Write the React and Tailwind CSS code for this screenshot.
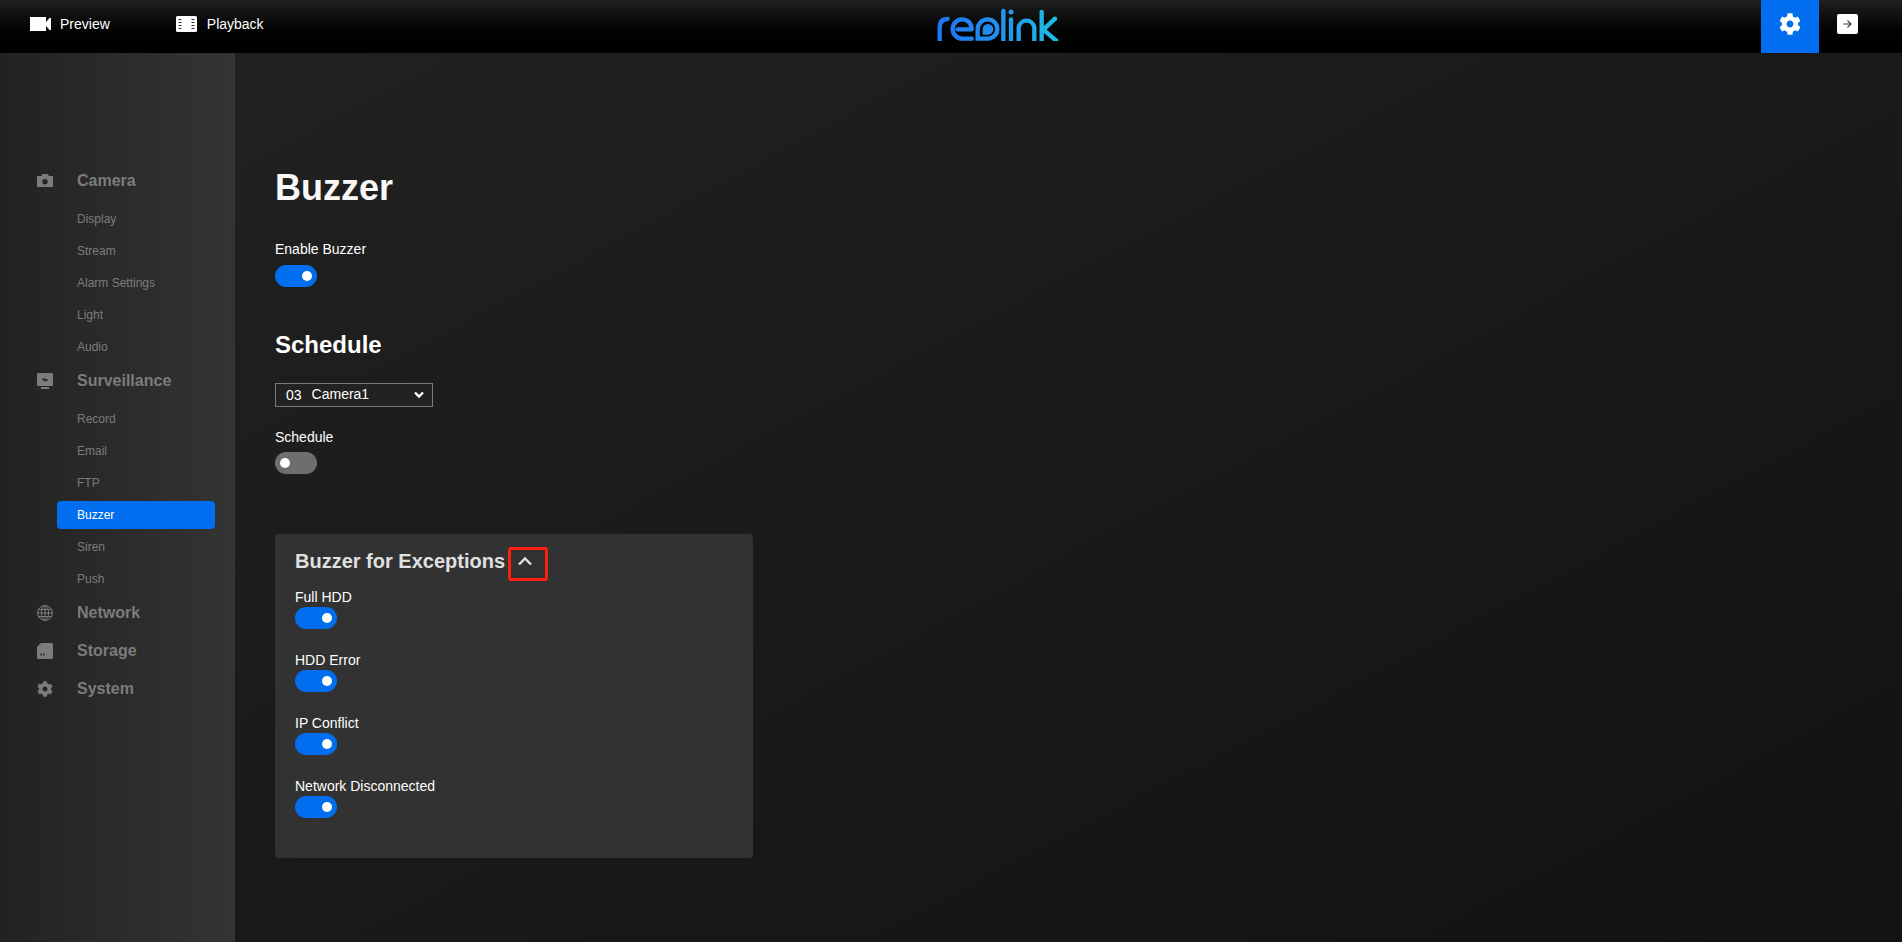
import { useState } from 'react';
import { FaCog } from 'react-icons/fa';

const menu = [
  { title: 'Camera', icon: CameraIcon, items: ['Display', 'Stream', 'Alarm Settings', 'Light', 'Audio'] },
  { title: 'Surveillance', icon: MonitorIcon, items: ['Record', 'Email', 'FTP', 'Buzzer', 'Siren', 'Push'] },
  { title: 'Network', icon: GlobeIcon, items: [] },
  { title: 'Storage', icon: StorageIcon, items: [] },
  { title: 'System', icon: FaCog, items: [] },
];

const exceptions = ['Full HDD', 'HDD Error', 'IP Conflict', 'Network Disconnected'];

function CameraIcon(props) {
  return (
    <svg viewBox="0 0 16 16" fill="currentColor" {...props}>
      <path
        fillRule="evenodd"
        d="M0 3h4l1.5-2h5L12 3h4v11H0V3zm8 3a2.700 2.700 0 1 0 0 5.400 2.700 2.700 0 0 0 0-5.400z"
      />
    </svg>
  );
}

function MonitorIcon(props) {
  return (
    <svg viewBox="0 0 16 16" fill="currentColor" {...props}>
      <path d="M1 0h14a1 1 0 0 1 1 1v11a1 1 0 0 1-1 1H1a1 1 0 0 1-1-1V1a1 1 0 0 1 1-1z" />
      <path d="M5 7l2.2-1.2.8 2 1-1 2 .6" fill="none" stroke="#272727" strokeWidth="1.4" />
      <path d="M4 14h8v2H4z" />
    </svg>
  );
}

function GlobeIcon(props) {
  return (
    <svg viewBox="0 0 16 16" fill="none" stroke="currentColor" {...props}>
      <circle cx="8" cy="8" r="7.4" />
      <ellipse cx="8" cy="8" rx="3.6" ry="7.4" />
      <path d="M8 .5v15M.5 8h15M1.6 4.5h12.8M1.6 11.5h12.8" />
    </svg>
  );
}

function StorageIcon(props) {
  return (
    <svg viewBox="0 0 16 16" fill="currentColor" {...props}>
      <path d="M4 0h10.500a1.500 1.500 0 0 1 1.500 1.500v13a1.500 1.500 0 0 1-1.500 1.500h-13A1.500 1.500 0 0 1 0 14.500V4z" />
      <path d="M3.500 10.300h1.200v2.400H3.500zM6.200 10.300h1.200v2.400H6.200z" fill="#272727" />
    </svg>
  );
}

function Logo() {
  return (
    <svg viewBox="50 22 366 99" className="h-[33px] w-[122px]" role="img" aria-label="reolink">
      <defs>
        <linearGradient id="brand" gradientUnits="userSpaceOnUse" x1="50" y1="0" x2="416" y2="0">
          <stop offset="0" stopColor="#1f74f6" />
          <stop offset="0.5" stopColor="#2290ee" />
          <stop offset="1" stopColor="#1cc0e4" />
        </linearGradient>
      </defs>
      <g fill="none" stroke="url(#brand)" strokeWidth="13">
        <path d="M58 121V82Q58 55 82 55" />
        <path d="M112 86H154A28.500 29 0 1 0 126 114H154" strokeLinejoin="round" />
        <path d="M202 56a29 29 0 0 1 0 58H172V86A30 30 0 0 1 202 56z" />
        <path d="M249 31V121M272 56V121" />
        <path d="M295 121V80A24 25 0 0 1 342 80V121" />
        <path d="M364 34V121M404 54L369 87L411 123" />
      </g>
      <g fill="url(#brand)">
        <path d="M203 70a16 16 0 0 1 0 32H187V86A16 16 0 0 1 203 70z" />
        <circle cx="272" cy="34" r="7.500" />
        <circle cx="82" cy="55" r="6.500" />
        <circle cx="112" cy="86" r="6.500" />
        <circle cx="154" cy="114" r="6.500" />
        <circle cx="249" cy="31" r="6.500" />
        <circle cx="272" cy="56" r="6.500" />
        <circle cx="364" cy="34" r="6.500" />
        <circle cx="404" cy="54" r="6.500" />
      </g>
    </svg>
  );
}

function Header() {
  return (
    <header className="flex h-[53px] shrink-0 bg-linear-to-b from-[#202020] to-black">
      <nav className="flex flex-1 items-center gap-[66px] pb-[5px] pl-[30px]">
        <a href="#preview" className="flex items-center gap-[9px]">
          <svg viewBox="0 0 21 14" fill="currentColor" className="h-3.5 w-[21px]">
            <path d="M0 0h16v5L19.500 1H21v12h-1.500L16 9V14H0z" />
          </svg>
          Preview
        </a>
        <a href="#playback" className="flex items-center gap-[10px]">
          <svg viewBox="0 0 21 16" className="h-4 w-[21px]">
            <rect width="21" height="16" rx="1.500" fill="currentColor" />
            <path
              d="M2.500 3.500h3M2.500 6.500h3M2.500 9.500h3M2.500 12.500h3M15.500 3.500h3M15.500 6.500h3M15.500 9.500h3M15.500 12.500h3"
              stroke="#333"
              strokeWidth="1.200"
            />
          </svg>
          Playback
        </a>
      </nav>
      <div className="flex items-center pb-[5px] pl-[107px]">
        <Logo />
      </div>
      <div className="flex flex-1 justify-end pr-[44px]">
        <button aria-label="Settings" className="flex w-[58px] items-center justify-center bg-[#006eee] pb-[5px]">
          <FaCog className="size-[22px]" />
        </button>
        <button aria-label="Log out" className="flex items-center pb-[5px] pl-[18px]">
          <svg viewBox="0 0 21 20" className="h-5 w-[21px]">
            <rect width="21" height="20" rx="2" fill="currentColor" />
            <path d="M6.500 10h7.500M10.500 6.500L14 10l-3.500 3.500" fill="none" stroke="#333" strokeWidth="1.100" />
          </svg>
        </button>
      </div>
    </header>
  );
}

function Sidebar() {
  return (
    <aside className="w-[235px] shrink-0 bg-linear-to-r from-[#222] to-[#343434] pt-[109px] text-[#7c7c7c]">
      {menu.map(({ title, icon: Icon, items }) => (
        <section key={title}>
          <h2 className="flex h-[38px] items-center gap-6 pl-[37px] text-base font-bold">
            <Icon className="size-4" />
            {title}
          </h2>
          {items.length > 0 && (
            <ul className="flex flex-col gap-1 pt-[5px] pr-5 pb-px pl-[57px] text-xs">
              {items.map((item) => (
                <li key={item}>
                  <a
                    href={`#${item}`}
                    className={
                      item === 'Buzzer'
                        ? 'flex h-7 items-center rounded bg-[#006eee] pl-5 text-white'
                        : 'flex h-7 items-center pl-5'
                    }
                  >
                    {item}
                  </a>
                </li>
              ))}
            </ul>
          )}
        </section>
      ))}
    </aside>
  );
}

function Toggle({ id, defaultChecked }) {
  return (
    <input
      id={id}
      type="checkbox"
      role="switch"
      defaultChecked={defaultChecked}
      className="block h-[22px] w-[42px] appearance-none rounded-full bg-[#6e6e6e] px-[5px] py-1.5 before:block before:size-2.5 before:rounded-full before:bg-white checked:bg-[#006eee] checked:before:ml-[22px]"
    />
  );
}

function Exceptions() {
  const [open, setOpen] = useState(true);

  return (
    <section className="mt-[60px] w-[478px] max-w-full rounded bg-[#323232] px-5 pt-[13px] pb-10">
      <div className="flex items-center gap-[13px]">
        <h2 className="text-xl font-bold text-[#e0e0e0]">Buzzer for Exceptions</h2>
        <button aria-label="Toggle exceptions" onClick={() => setOpen(!open)} className="relative size-3.5">
          <svg viewBox="0 0 14 14" fill="none" stroke="#e0e0e0" strokeWidth="2.400" className="size-3.5">
            <path d={open ? 'M1 10.500L7 4.500L13 10.500' : 'M1 4.500L7 10.500L13 4.500'} />
          </svg>
          {/* highlight frame */}
          <span className="absolute -top-[7px] -left-[10px] h-[34px] w-10 rounded-[3px] border-3 border-[#fb2012]" />
        </button>
      </div>
      {open && (
        <div className="flex flex-col gap-[21px] pt-3">
          {exceptions.map((name) => (
            <div key={name}>
              <label htmlFor={name} className="block">{name}</label>
              <Toggle id={name} defaultChecked />
            </div>
          ))}
        </div>
      )}
    </section>
  );
}

export default function App() {
  return (
    <div className="flex min-h-screen flex-col bg-[#1e1e1e] font-['Liberation_Sans',Arial,sans-serif] text-sm text-white">
      <Header />
      <div className="flex flex-1">
        <Sidebar />
        <main className="flex-1 bg-linear-to-br from-[#212121] to-[#121212] px-10 pt-[115px]">
          <h1 className="text-4xl font-bold text-[#f8f8f8]">Buzzer</h1>
          <label htmlFor="buzzer" className="mt-[31px] block">Enable Buzzer</label>
          <div className="mt-1.5">
            <Toggle id="buzzer" defaultChecked />
          </div>

          <h2 className="mt-[42px] text-2xl font-bold">Schedule</h2>
          <label className="mt-[22px] flex h-6 w-[158px] items-center border border-[#7a7a7a] bg-[#222] pr-2 pl-2.5">
            03
            <select aria-label="Camera" className="ml-2.5 min-w-0 flex-1 appearance-none pb-0.5 outline-none">
              <option>Camera1</option>
            </select>
            <svg viewBox="0 0 10 8" fill="none" stroke="currentColor" strokeWidth="2.400" className="h-2 w-2.5">
              <path d="M1 1.500L5 5.500L9 1.500" />
            </svg>
          </label>
          <label htmlFor="schedule" className="mt-5 block">Schedule</label>
          <div className="mt-[5px]">
            <Toggle id="schedule" />
          </div>

          <Exceptions />
        </main>
      </div>
    </div>
  );
}
